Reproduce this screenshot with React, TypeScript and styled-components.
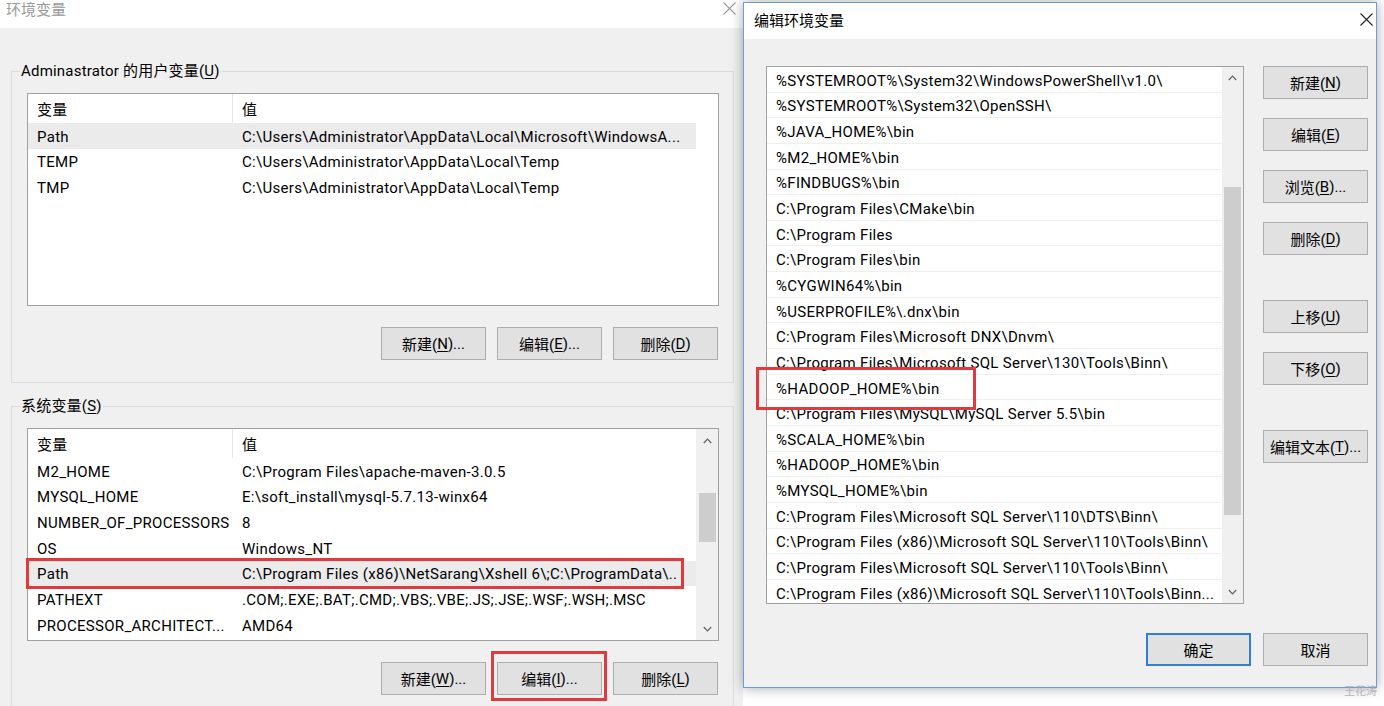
import React from "react";
import styled, { createGlobalStyle } from "styled-components";

const GlobalStyle = createGlobalStyle`
  html, body {
    margin: 0;
    padding: 0;
    background: #fff;
  }
  body {
    font-family: Roboto, "Noto Sans CJK SC", sans-serif;
    font-size: 15px;
    color: #000;
  }
  * {
    box-sizing: border-box;
  }
`;

const Desktop = styled.div`
  position: relative;
  width: 1384px;
  height: 706px;
  overflow: hidden;
  background: #fff;
`;

const EnvWindow = styled.div`
  width: 743px;
  height: 706px;
  background: #f0f0f0;
  display: flex;
  flex-direction: column;
`;

const EditWindow = styled.div`
  position: absolute;
  left: 743px;
  top: 2px;
  width: 634px;
  height: 686px;
  border: 1px solid #6b9ed8;
  background: #f0f0f0;
  box-shadow: 0 0 12px rgba(0, 0, 0, 0.35);
  display: flex;
  flex-direction: column;
`;

const TitleBar = styled.div<{ $active?: boolean; $height: number; $shift?: number }>`
  flex: none;
  height: ${(p) => p.$height}px;
  padding: 0 ${(p) => (p.$active ? 3 : 7)}px ${(p) => p.$shift || 0}px ${(p) => (p.$active ? 10 : 6)}px;
  background: #fff;
  display: flex;
  align-items: center;
  justify-content: space-between;
  color: ${(p) => (p.$active ? "#000" : "#9a9a9a")};
  font-size: 15px;
`;

const Group = styled.fieldset<{ $top: number }>`
  margin: ${(p) => p.$top}px 9px 0 11px;
  padding: 12px 14px 22px 15px;
  border: 1px solid #dcdcdc;
  min-width: 0;
`;

const GroupLabel = styled.legend`
  margin-left: -7px;
  padding: 0 1px;
  line-height: 20px;
  font-size: 15px;
  letter-spacing: 0.2px;
`;

const Mn = styled.span`
  text-decoration: underline;
  text-underline-offset: 2px;
`;

const ListBox = styled.div<{ $height: number; $width?: number }>`
  height: ${(p) => p.$height}px;
  width: ${(p) => (p.$width ? `${p.$width}px` : "auto")};
  border: 1px solid #a0a0a0;
  background: #fff;
  display: flex;
  letter-spacing: 0.3px;
`;

const ListBody = styled.div`
  flex: 1;
  min-width: 0;
  display: flex;
  flex-direction: column;
  overflow: hidden;
`;

const VarRow = styled.div<{ $header?: boolean; $selected?: boolean }>`
  flex: none;
  height: ${(p) => (p.$header ? 29 : 25.67)}px;
  padding-top: ${(p) => (p.$header ? 0 : 2)}px;
  display: grid;
  grid-template-columns: 205px 1fr;
  background: ${(p) => (p.$selected ? "#ebebeb" : "#fff")};
`;

const VarCell = styled.div<{ $divider?: boolean }>`
  padding-left: 9px;
  display: flex;
  align-items: center;
  white-space: nowrap;
  overflow: hidden;
  border-right: ${(p) => (p.$divider ? "1px solid #e5e5e5" : "none")};
`;

const PathRow = styled.div`
  flex: none;
  height: 25.65px;
  padding: 3px 0 0 9px;
  display: flex;
  align-items: center;
  white-space: nowrap;
  overflow: hidden;
  border-bottom: 1px solid #efefef;
`;

const ScrollTrack = styled.div<{ $width: number; $blank?: boolean }>`
  flex: none;
  width: ${(p) => p.$width}px;
  background: ${(p) => (p.$blank ? "#fff" : "#f0f0f0")};
  display: flex;
  flex-direction: column;
  align-items: center;
`;

const ScrollArrow = styled.div<{ $size: number }>`
  flex: none;
  height: ${(p) => p.$size}px;
  width: 100%;
  display: flex;
  align-items: center;
  justify-content: center;
`;

const ScrollThumb = styled.div<{ $offset: number; $size: number }>`
  flex: none;
  margin-top: ${(p) => p.$offset}px;
  height: ${(p) => p.$size}px;
  width: 17px;
  background: #cdcdcd;
`;

const ScrollRest = styled.div`
  flex: 1;
`;

const ButtonRow = styled.div<{ $top: number }>`
  margin-top: ${(p) => p.$top}px;
  padding-right: 1px;
  display: flex;
  justify-content: flex-end;
  gap: 11px;
`;

const Button = styled.div<{ $focused?: boolean }>`
  flex: none;
  width: 105px;
  height: 33px;
  border: ${(p) => (p.$focused ? "2px solid #2f7fd6" : "1px solid #adadad")};
  background: #e1e1e1;
  display: flex;
  align-items: center;
  justify-content: center;
  font-size: 15px;
  white-space: nowrap;
`;

const EditBody = styled.div`
  flex: 1;
  padding: 27px 8px 0 22px;
  display: flex;
  flex-direction: column;
`;

const EditMain = styled.div`
  display: flex;
  gap: 19px;
`;

const ButtonStack = styled.div`
  display: flex;
  flex-direction: column;
  gap: 45px;
`;

const ButtonGroup = styled.div`
  display: flex;
  flex-direction: column;
  gap: 19px;
`;

const Footer = styled.div`
  margin-top: 29px;
  display: flex;
  justify-content: flex-end;
  gap: 12px;
`;

const Annotation = styled.div<{ $x: number; $y: number; $w: number; $h: number }>`
  position: absolute;
  left: ${(p) => p.$x}px;
  top: ${(p) => p.$y}px;
  width: ${(p) => p.$w}px;
  height: ${(p) => p.$h}px;
  border: 3px solid #e0393e;
  pointer-events: none;
`;

const Watermark = styled.div`
  position: absolute;
  right: 7px;
  bottom: 8px;
  font-size: 11px;
  color: #b4b4b4;
  font-family: "Noto Sans CJK SC", sans-serif;
`;

function CloseIcon({ color }: { color: string }) {
  return (
    <svg width="13" height="13" viewBox="0 0 13 13">
      <path d="M0.5 0.5 L12.5 12.5 M12.5 0.5 L0.5 12.5" stroke={color} strokeWidth="1.1" fill="none" />
    </svg>
  );
}

function Chevron({ down }: { down?: boolean }) {
  return (
    <svg width="9" height="6" viewBox="0 0 9 6">
      <path
        d={down ? "M0.8 1 L4.5 4.8 L8.2 1" : "M0.8 5 L4.5 1.2 L8.2 5"}
        stroke="#606060"
        strokeWidth="1.2"
        fill="none"
      />
    </svg>
  );
}

type EnvVar = { name: string; value: string; selected?: boolean };

const userVars: EnvVar[] = [
  { name: "Path", value: "C:\\Users\\Administrator\\AppData\\Local\\Microsoft\\WindowsA...", selected: true },
  { name: "TEMP", value: "C:\\Users\\Administrator\\AppData\\Local\\Temp" },
  { name: "TMP", value: "C:\\Users\\Administrator\\AppData\\Local\\Temp" },
];

const systemVars: EnvVar[] = [
  { name: "M2_HOME", value: "C:\\Program Files\\apache-maven-3.0.5" },
  { name: "MYSQL_HOME", value: "E:\\soft_install\\mysql-5.7.13-winx64" },
  { name: "NUMBER_OF_PROCESSORS", value: "8" },
  { name: "OS", value: "Windows_NT" },
  { name: "Path", value: "C:\\Program Files (x86)\\NetSarang\\Xshell 6\\;C:\\ProgramData\\..", selected: true },
  { name: "PATHEXT", value: ".COM;.EXE;.BAT;.CMD;.VBS;.VBE;.JS;.JSE;.WSF;.WSH;.MSC" },
  { name: "PROCESSOR_ARCHITECT...", value: "AMD64" },
];

const pathEntries = [
  "%SYSTEMROOT%\\System32\\WindowsPowerShell\\v1.0\\",
  "%SYSTEMROOT%\\System32\\OpenSSH\\",
  "%JAVA_HOME%\\bin",
  "%M2_HOME%\\bin",
  "%FINDBUGS%\\bin",
  "C:\\Program Files\\CMake\\bin",
  "C:\\Program Files",
  "C:\\Program Files\\bin",
  "%CYGWIN64%\\bin",
  "%USERPROFILE%\\.dnx\\bin",
  "C:\\Program Files\\Microsoft DNX\\Dnvm\\",
  "C:\\Program Files\\Microsoft SQL Server\\130\\Tools\\Binn\\",
  "%HADOOP_HOME%\\bin",
  "C:\\Program Files\\MySQL\\MySQL Server 5.5\\bin",
  "%SCALA_HOME%\\bin",
  "%HADOOP_HOME%\\bin",
  "%MYSQL_HOME%\\bin",
  "C:\\Program Files\\Microsoft SQL Server\\110\\DTS\\Binn\\",
  "C:\\Program Files (x86)\\Microsoft SQL Server\\110\\Tools\\Binn\\",
  "C:\\Program Files\\Microsoft SQL Server\\110\\Tools\\Binn\\",
  "C:\\Program Files (x86)\\Microsoft SQL Server\\110\\Tools\\Binn...",
];

function VarList({ vars, scroll }: { vars: EnvVar[]; scroll?: boolean }) {
  return (
    <ListBox $height={213}>
      <ListBody>
        <VarRow $header>
          <VarCell $divider>变量</VarCell>
          <VarCell>值</VarCell>
        </VarRow>
        {vars.map((v, i) => (
          <VarRow key={i} $selected={v.selected}>
            <VarCell>{v.name}</VarCell>
            <VarCell>{v.value}</VarCell>
          </VarRow>
        ))}
      </ListBody>
      {scroll ? (
        <ScrollTrack $width={22}>
          <ScrollArrow $size={23}>
            <Chevron />
          </ScrollArrow>
          <ScrollThumb $offset={41} $size={49} />
          <ScrollRest />
          <ScrollArrow $size={23}>
            <Chevron down />
          </ScrollArrow>
        </ScrollTrack>
      ) : (
        <ScrollTrack $width={22} $blank />
      )}
    </ListBox>
  );
}

export default function App() {
  return (
    <>
      <GlobalStyle />
      <Desktop>
        <EnvWindow>
          <TitleBar $height={28} $shift={11}>
            <span>环境变量</span>
            <CloseIcon color="#9a9a9a" />
          </TitleBar>
          <Group $top={33}>
            <GroupLabel>
              Adminastrator 的用户变量(<Mn>U</Mn>)
            </GroupLabel>
            <VarList vars={userVars} />
            <ButtonRow $top={21}>
              <Button>
                新建(<Mn>N</Mn>)...
              </Button>
              <Button>
                编辑(<Mn>E</Mn>)...
              </Button>
              <Button>
                删除(<Mn>D</Mn>)
              </Button>
            </ButtonRow>
          </Group>
          <Group $top={13}>
            <GroupLabel>
              系统变量(<Mn>S</Mn>)
            </GroupLabel>
            <VarList vars={systemVars} scroll />
            <ButtonRow $top={21}>
              <Button>
                新建(<Mn>W</Mn>)...
              </Button>
              <Button>
                编辑(<Mn>I</Mn>)...
              </Button>
              <Button>
                删除(<Mn>L</Mn>)
              </Button>
            </ButtonRow>
          </Group>
        </EnvWindow>

        <EditWindow>
          <TitleBar $height={36} $shift={3} $active>
            <span>编辑环境变量</span>
            <CloseIcon color="#222" />
          </TitleBar>
          <EditBody>
            <EditMain>
              <ListBox $height={538} $width={478}>
                <ListBody>
                  {pathEntries.map((p, i) => (
                    <PathRow key={i}>{p}</PathRow>
                  ))}
                </ListBody>
                <ScrollTrack $width={21}>
                  <ScrollArrow $size={22}>
                    <Chevron />
                  </ScrollArrow>
                  <ScrollThumb $offset={98} $size={328} />
                  <ScrollRest />
                  <ScrollArrow $size={22}>
                    <Chevron down />
                  </ScrollArrow>
                </ScrollTrack>
              </ListBox>
              <ButtonStack>
                <ButtonGroup>
                  <Button>
                    新建(<Mn>N</Mn>)
                  </Button>
                  <Button>
                    编辑(<Mn>E</Mn>)
                  </Button>
                  <Button>
                    浏览(<Mn>B</Mn>)...
                  </Button>
                  <Button>
                    删除(<Mn>D</Mn>)
                  </Button>
                </ButtonGroup>
                <ButtonGroup>
                  <Button>
                    上移(<Mn>U</Mn>)
                  </Button>
                  <Button>
                    下移(<Mn>O</Mn>)
                  </Button>
                </ButtonGroup>
                <ButtonGroup>
                  <Button>
                    编辑文本(<Mn>T</Mn>)...
                  </Button>
                </ButtonGroup>
              </ButtonStack>
            </EditMain>
            <Footer>
              <Button $focused>确定</Button>
              <Button>取消</Button>
            </Footer>
          </EditBody>
        </EditWindow>

        <Annotation $x={26} $y={558} $w={658} $h={31} />
        <Annotation $x={491} $y={651} $w={116} $h={50} />
        <Annotation $x={756} $y={367} $w={220} $h={43} />
        <Watermark>王花涛</Watermark>
      </Desktop>
    </>
  );
}
